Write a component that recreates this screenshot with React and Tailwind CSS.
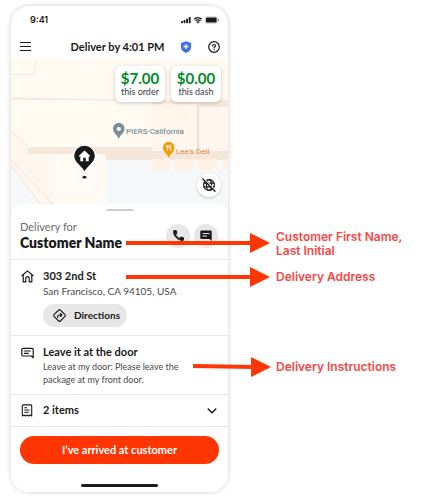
import React from "react";

const stroke = {
  fill: "none",
  stroke: "currentColor",
  strokeLinecap: "round",
  strokeLinejoin: "round",
};

function StatusIcons() {
  return (
    <svg viewBox="0 0 38 8" className="h-2 w-[38px]" aria-hidden="true">
      <g fill="#191919">
        <rect x="0" y="5" width="1.8" height="2.2" rx=".4" />
        <rect x="2.6" y="4" width="1.8" height="3.2" rx=".4" />
        <rect x="5.2" y="2.5" width="1.8" height="4.7" rx=".4" />
        <rect x="7.8" y="1" width="1.8" height="6.2" rx=".4" />
        <path d="M17 7.6 15.4 6a2.3 2.3 0 0 1 3.2 0Z" />
        <rect x="25" y="1.500" width="10.6" height="5" rx="1" />
        <rect x="36.8" y="3" width="1" height="2" rx=".5" opacity=".6" />
      </g>
      <g {...stroke} stroke="#191919" strokeWidth="1.300" strokeLinecap="butt">
        <path d="M13.2 3.2a5.6 5.6 0 0 1 7.600 0M14.5 5a3.8 3.8 0 0 1 5 0" />
      </g>
      <rect x="24.3" y=".8" width="12" height="6.400" rx="1.600" fill="none" stroke="#191919" strokeOpacity=".4" strokeWidth=".6" />
    </svg>
  );
}

function ShieldIcon() {
  return (
    <svg viewBox="0 0 12 12" className="size-3" aria-hidden="true">
      <path d="M6 .2 11 2v4c0 3-2.200 4.800-5 5.900C3.200 10.800 1 9 1 6V2Z" fill="#3f6bfb" />
      <path d="M6 3.200v4.800M3.600 5.600h4.800" stroke="#fff" strokeWidth="1.500" />
    </svg>
  );
}

function HelpIcon() {
  return (
    <svg viewBox="0 0 12 12" className="size-3" aria-hidden="true">
      <g {...stroke} strokeWidth="1.200">
        <circle cx="6" cy="6" r="5.300" />
        <path d="M4.600 4.900c0-.9.600-1.400 1.400-1.400s1.500.5 1.500 1.300c0 1-1.400 1-1.400 2.100" />
        <path d="M6.100 8.600v.1" />
      </g>
    </svg>
  );
}

function HouseIcon() {
  return (
    <svg viewBox="0 0 13 13" className="h-[13px] w-[13px]" aria-hidden="true">
      <g {...stroke} strokeWidth="1.200">
        <path d="M.9 5.700 6.500.9l5.600 4.800" />
        <path d="M2.200 4.800v7.100h2.600V8.200c0-.9.700-1.600 1.700-1.600s1.700.7 1.700 1.600v3.700h2.600V4.800" />
      </g>
    </svg>
  );
}

function DirectionsIcon() {
  return (
    <svg viewBox="0 0 13 13" className="h-[13px] w-[13px]" aria-hidden="true">
      <g {...stroke} strokeWidth="1.100">
        <path d="M5.700 1 1 5.700a1.100 1.100 0 0 0 0 1.600L5.700 12a1.100 1.100 0 0 0 1.600 0L12 7.300a1.100 1.100 0 0 0 0-1.600L7.300 1a1.100 1.100 0 0 0-1.600 0Z" />
        <path d="M4.700 8.500V7.300c0-.8.600-1.300 1.300-1.300h2.600M7.400 4.500 8.900 6 7.400 7.500" />
      </g>
    </svg>
  );
}

function NoteIcon() {
  return (
    <svg viewBox="0 0 13 12" className="h-3 w-[13px]" aria-hidden="true">
      <g {...stroke} strokeWidth="1.200">
        <path d="M2 1.300h9a1.200 1.200 0 0 1 1.200 1.200v8.300L10.300 9H2A1.200 1.200 0 0 1 .8 7.800V2.500A1.200 1.200 0 0 1 2 1.300Z" />
        <path d="M3.300 4h6M3.300 6.300h4" />
      </g>
    </svg>
  );
}

function ReceiptIcon() {
  return (
    <svg viewBox="0 0 12 13" className="h-[13px] w-3" aria-hidden="true">
      <g {...stroke} strokeWidth="1.100">
        <path d="M2.300.9h7.400a1 1 0 0 1 1 1V12l-1.600-1-1.500 1L6 11l-1.600 1-1.500-1-1.600 1V1.900a1 1 0 0 1 1-1Z" />
        <path d="M3.700 3.700h2M3.700 6h4.600M3.700 8.300h3.600" />
      </g>
    </svg>
  );
}

function PhoneIcon() {
  return (
    <svg viewBox="2 2 20 20" className="size-[11px]" aria-hidden="true">
      <path
        fill="currentColor"
        stroke="currentColor"
        strokeWidth="1.800"
        strokeLinejoin="round"
        d="M6.620 10.790c1.440 2.830 3.760 5.140 6.590 6.590l2.200-2.200c.27-.27.670-.36 1.020-.24 1.120.37 2.330.57 3.570.57.550 0 1 .45 1 1V20c0 .55-.45 1-1 1-9.390 0-17-7.610-17-17 0-.55.45-1 1-1h3.500c.550 0 1 .45 1 1 0 1.250.2 2.450.57 3.570.110.35.030.74-.25 1.020l-2.200 2.200z"
      />
    </svg>
  );
}

function ChatIcon() {
  return (
    <svg viewBox="0 0 12 11" className="h-[11px] w-3" aria-hidden="true">
      <path d="M1.600.5h8.800c.8 0 1.300.5 1.300 1.300V11L9.500 9H1.600C.8 9 .3 8.500.3 7.700V1.800C.3 1 .8.500 1.600.5Z" fill="currentColor" />
      <path d="M2.500 3.500h7M2.500 6h4.500" stroke="#e7e7e7" strokeWidth="1.100" />
    </svg>
  );
}

function GlobeOffIcon() {
  return (
    <svg viewBox="0 0 14 14" className="size-[14px]" aria-hidden="true">
      <g {...stroke} strokeWidth="1.200">
        <circle cx="7" cy="7" r="5.400" />
        <ellipse cx="7" cy="7" rx="2.500" ry="5.400" />
        <path d="M2 5.200h10M2 8.800h10" />
      </g>
      <path d="M2 .8 13.600 12.400" stroke="#fff" strokeWidth="1.200" />
      <path d="M.8 1 13 13.200" {...stroke} strokeWidth="1.300" />
    </svg>
  );
}

function MapView() {
  return (
    <svg viewBox="0 0 217 155" preserveAspectRatio="xMidYMid slice" className="absolute inset-0 size-full" role="img" aria-label="Map of the delivery area">
      <rect width="217" height="155" fill="#fffaf2" />
      <path d="M0 102 36 155H0Z" fill="#f7f8fa" />
      <path d="M0 72 18 89 44 95v60h-4L0 103Z" fill="#fdf8ef" />
      <path d="M0 72 17 87M0 101l41 43M0 106l37 49" stroke="#fbecd9" strokeWidth="1.500" fill="none" />
      <path d="M95 101h122v54H95Z" fill="#f7f8fa" />
      <path d="M17 88h124v4h76v9H95v-4H44v-2H17Z" fill="#f4e6d8" />
      <path d="M44 95h51v60H44Z" fill="#fffaf3" />
      <path d="M0 38.500 141 41h76v7h-76v-6L0 40.500Z" fill="#f5e8db" />
      <path d="M141 45h45v47h-45Z" fill="#fff6ec" />
      <path d="M188 48h29v44h-29Z" fill="#fff7ef" />
      <path d="M187 46v46" stroke="#f1e0cd" strokeWidth="2" />
      <path d="M0 15.500h24V0" stroke="#f8ead9" strokeWidth="1" fill="none" />
      <path d="M141 100h18v11h-18ZM164 100h19v11h-19ZM188 100h18v11h-18ZM212 100h5v11h-5Z" fill="#fff2e5" />
      <path d="M32 145h12" stroke="#fdebd3" strokeWidth="2" />

      <path d="M107.800 80.500c-.6-4.500-5.800-6-5.800-11a5.800 5.800 0 0 1 11.600 0c0 5-5.200 6.500-5.800 11Z" fill="#78909c" />
      <circle cx="107.800" cy="70" r="2.100" fill="#fff" />
      <text x="115" y="75" fontSize="8" fill="#62798a" className="font-['Roboto',sans-serif]">PIERS-California</text>

      <path d="M157.700 99.500c-.6-4.500-5.700-6-5.700-11a5.700 5.700 0 0 1 11.400 0c0 5-5.100 6.500-5.700 11Z" fill="#f59a0c" />
      <path d="M155.500 86v2.200M156.600 86v6M155.500 88.200h2.200V86M159.800 92v-6.200c-1.200.6-1.400 2-1.200 3.500h1.200" stroke="#fff" strokeWidth=".8" fill="none" />
      <text x="165" y="95" fontSize="8" fill="#df8a3c" className="font-['Roboto',sans-serif]">Lee's Deli</text>

      <path d="M73.500 114c-1.500-6-11-9-11-17a11 11 0 0 1 22 0c0 8-9.500 11-11 17Z" fill="#191919" stroke="#fff" strokeWidth="1.400" />
      <path d="M67.700 97 73.500 91.500l5.800 5.500-.8.800-.8-.6v5h-2.900v-3.500h-2.600v3.500h-2.900v-5l-.8.600Z" fill="#fff" />
      <ellipse cx="73.500" cy="118.200" rx="2.200" ry="1.200" fill="#191919" />
    </svg>
  );
}

function EarningsCard({ amount, label }) {
  return (
    <div className="flex h-9 w-[50px] flex-col items-center justify-center rounded-md bg-white shadow-[0_1px_4px_rgba(0,0,0,0.2)]">
      <span className="text-[15px] leading-4 font-bold text-[#028a28]">{amount}</span>
      <span className="text-[9px] leading-3 text-[#3c3c3c]">{label}</span>
    </div>
  );
}

function Arrows() {
  return (
    <svg viewBox="0 0 150 150" className="pointer-events-none absolute top-[229px] left-[123px] h-[150px] w-[150px]" aria-hidden="true">
      <g stroke="#ff3503" strokeWidth="4">
        <path d="M3 14h126M3 48h126M70 137l61 1" />
      </g>
      <g fill="#ff3503">
        <path d="M127 4l20 10-20 10ZM127 38l20 10-20 10ZM128 128l20 10-20 10Z" />
      </g>
    </svg>
  );
}

export default function App() {
  return (
    <div className="relative min-h-screen bg-white font-['Lato',sans-serif] text-[#191919]">
      <div className="grid grid-cols-[minmax(0,217px)_1fr] gap-x-12 pt-[6px] pl-[11px]">
        <main className="overflow-hidden rounded-[18px] bg-white shadow-[0_0_5px_rgba(0,0,0,0.2)]">
          <div className="flex h-7 items-center justify-between pr-[9px] pl-[19px]">
            <span className="font-['Inter',sans-serif] text-[9px] font-semibold">9:41</span>
            <StatusIcons />
          </div>
          <header className="flex h-[25px] items-center px-2 pt-1 pb-1">
            <button type="button" aria-label="Menu" className="flex h-3 w-3 flex-col justify-center gap-[3px] pl-px">
              <span className="h-px w-[11px] bg-[#191919]" />
              <span className="h-px w-[11px] bg-[#191919]" />
              <span className="h-px w-[11px] bg-[#191919]" />
            </button>
            <h1 className="flex-1 pl-6 text-center text-[11px] leading-4 font-bold">Deliver by 4:01 PM</h1>
            <div className="flex gap-4">
              <button type="button" aria-label="Safety"><ShieldIcon /></button>
              <button type="button" aria-label="Help"><HelpIcon /></button>
            </div>
          </header>

          <section className="relative flex h-[155px] flex-col items-end justify-between px-[7px] pt-[7px] pb-[17px]">
            <MapView />
            <div className="relative flex gap-[6px]">
              <EarningsCard amount="$7.00" label="this order" />
              <EarningsCard amount="$0.00" label="this dash" />
            </div>
            <button type="button" aria-label="Hide map" className="relative flex size-6 items-center justify-center rounded-full bg-white shadow-[0_1px_3px_rgba(0,0,0,0.2)]">
              <GlobeOffIcon />
            </button>
          </section>

          <div className="relative -mt-[10px] rounded-t-[12px] bg-white">
            <div className="flex h-3 items-center justify-center">
              <span className="h-[2px] w-7 rounded-full bg-[#cfcfcf]" />
            </div>
            <section className="flex h-11 items-center justify-between border-b border-[#e7e7e7] pr-[10px] pl-[9px]">
              <div className="pb-1">
                <p className="text-[11px] leading-[14px] text-[#6c6c6c]">Delivery for</p>
                <h2 className="text-[14px] leading-[18px] font-extrabold">Customer Name</h2>
              </div>
              <div className="flex gap-1 pb-1">
                <button type="button" aria-label="Call" className="flex size-6 items-center justify-center rounded-full bg-[#e7e7e7]"><PhoneIcon /></button>
                <button type="button" aria-label="Message" className="flex size-6 items-center justify-center rounded-full bg-[#e7e7e7]"><ChatIcon /></button>
              </div>
            </section>

            <section className="flex h-[76px] gap-[10px] border-b border-[#e7e7e7] pt-[9px] pl-[10px]">
              <div className="w-3 pt-px"><HouseIcon /></div>
              <div>
                <h3 className="text-[11px] leading-[14px] font-bold">303 2nd St</h3>
                <p className="text-[10px] leading-4 text-[#494949]">San Francisco, CA 94105, USA</p>
                <button type="button" className="mt-[5px] flex h-[23px] w-[84px] items-center gap-2 rounded-full bg-[#e7e7e7] pl-[10px] text-[10px] font-bold">
                  <DirectionsIcon />
                  Directions
                </button>
              </div>
            </section>

            <section className="flex h-[59px] gap-[10px] border-b border-[#e7e7e7] pt-[9px] pl-[10px]">
              <div className="w-3 pt-[2px]"><NoteIcon /></div>
              <div>
                <h3 className="text-[11px] leading-[14px] font-bold">Leave it at the door</h3>
                <p className="pt-px text-[9px] leading-[13px] text-[#494949]">
                  Leave at my door: Please leave the
                  <br />
                  package at my front door.
                </p>
              </div>
            </section>

            <button type="button" className="flex h-8 w-full items-center gap-[10px] border-b border-[#e7e7e7] pr-[11px] pl-[10px] text-left">
              <ReceiptIcon />
              <span className="flex-1 text-[11px] font-bold">2 items</span>
              <svg viewBox="0 0 10 6" className="h-[6px] w-[10px]" aria-hidden="true">
                <path d="m1.200 1 3.800 3.800L8.800 1" {...stroke} strokeWidth="1.400" />
              </svg>
            </button>

            <div className="px-[9px] pt-[9px]">
              <button type="button" className="h-7 w-full rounded-full bg-[#ff3503] text-[11px] font-bold text-white">
                I’ve arrived at customer
              </button>
            </div>
            <div className="flex justify-center pt-5 pb-[5px]">
              <span className="h-[3px] w-[77px] rounded-full bg-[#191919]" />
            </div>
          </div>
        </main>

        <aside className="flex flex-col gap-3 pt-[224px] font-['Inter',sans-serif] text-[12px] leading-[14px] font-semibold text-[#fb4646]">
          <p>
            Customer First Name,
            <br />
            Last Initial
          </p>
          <p>Delivery Address</p>
          <p className="pt-16">Delivery Instructions</p>
        </aside>
      </div>
      <Arrows />
    </div>
  );
}
